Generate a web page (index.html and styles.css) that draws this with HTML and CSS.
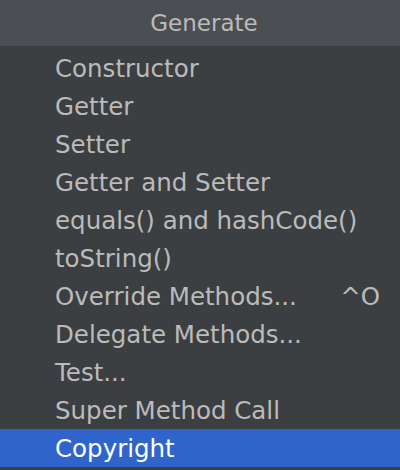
FILE: index.html
```html
<!DOCTYPE html>
<html>
<head>
<meta charset="utf-8">
<link rel="stylesheet" href="styles.css">
</head>
<body>
<div class="popup">
  <div class="header">Generate</div>
  <ul class="menu">
    <li class="item"><span>Constructor</span></li>
    <li class="item"><span>Getter</span></li>
    <li class="item"><span>Setter</span></li>
    <li class="item"><span>Getter and Setter</span></li>
    <li class="item"><span>equals() and hashCode()</span></li>
    <li class="item"><span>toString()</span></li>
    <li class="item"><span>Override Methods...</span><span class="shortcut">^O</span></li>
    <li class="item"><span>Delegate Methods...</span></li>
    <li class="item"><span>Test...</span></li>
    <li class="item"><span>Super Method Call</span></li>
    <li class="item selected"><span>Copyright</span></li>
  </ul>
</div>
</body>
</html>
```

FILE: styles.css
```css
html, body {
  margin: 0;
  padding: 0;
  background: #3c3f41;
}
.popup {
  width: 400px;
  height: 470px;
  background: #3c3f41;
  font-family: "DejaVu Sans", sans-serif;
  color: #bbbbbb;
  overflow: hidden;
}
.header {
  height: 46px;
  background: #4b4e52;
  display: flex;
  align-items: center;
  justify-content: center;
  font-size: 23px;
  padding-left: 8px;
  box-sizing: border-box;
  color: #bbbbbb;
}
.menu {
  list-style: none;
  margin: 0;
  padding: 3px 0;
}
.item {
  height: 38px;
  display: flex;
  align-items: center;
  justify-content: space-between;
  padding: 0 20px 0 55px;
  font-size: 24.5px;
  white-space: nowrap;
}
.selected {
  background: #2f65ca;
  color: #ffffff;
}
.shortcut {
  margin-left: 20px;
}
```
